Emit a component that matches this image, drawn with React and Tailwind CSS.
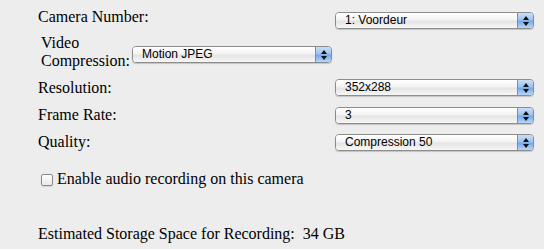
import React from 'react';

const Popup = ({ value, width, className = '' }) => (
  <div
    className={`flex h-[17px] shrink-0 overflow-hidden rounded-[4px] border border-[#8c8c8c] shadow-[0_1px_1px_rgba(0,0,0,0.18)] ${className}`}
    style={{ width }}
  >
    <div className="flex-1 bg-[linear-gradient(#ffffff,#f3f3f3_45%,#e4e4e4_55%,#f7f7f7)] pl-[9px] text-[12px] leading-[15px] text-black [font-family:'Liberation_Sans',Arial,sans-serif]">
      {value}
    </div>
    <div className="flex w-[16px] flex-col items-center justify-center gap-[2px] border-l border-[#6f8fbd] bg-[linear-gradient(#c9def7,#9ec3ef_45%,#74a9ea_55%,#b7d6fa)]">
      <svg width="6" height="4" viewBox="0 0 6 4"><path d="M3 0L6 4H0z" fill="#111" /></svg>
      <svg width="6" height="4" viewBox="0 0 6 4"><path d="M0 0H6L3 4z" fill="#111" /></svg>
    </div>
  </div>
);

const App = () => {
  return (
    <div className="h-[249px] w-[544px] overflow-hidden bg-[#ededed] pl-[38px] pt-[8px] text-[16px] leading-[18px] text-black [font-family:'Liberation_Serif','Times_New_Roman',serif]">
      {/* camera */}
      <div className="flex h-[26px] items-start">
        <div className="w-[297px]">Camera Number:</div>
        <Popup value="1: Voordeur" width={199} className="mt-[4px]" />
      </div>

      {/* compression */}
      <div className="flex h-[45px] items-start">
        <div className="ml-[3px] w-[91px]">Video Compression:</div>
        <Popup value="Motion JPEG" width={200} className="mt-[12px]" />
      </div>

      {/* resolution, frame rate, quality */}
      <div className="flex h-[27px] items-start">
        <div className="w-[297px]">Resolution:</div>
        <Popup value="352x288" width={199} />
      </div>
      <div className="flex h-[27px] items-start">
        <div className="w-[297px]">Frame Rate:</div>
        <Popup value="3" width={199} className="mt-[1px]" />
      </div>
      <div className="flex h-[27px] items-start">
        <div className="w-[297px]">Quality:</div>
        <Popup value="Compression 50" width={199} className="mt-[1px]" />
      </div>

      <div className="mt-[10px] flex items-start">
        <div className="ml-[3px] mt-[4px] h-[12px] w-[12px] rounded-[2px] border border-[#8a8a8a] bg-[linear-gradient(#ffffff,#e9e9e9)] shadow-[0_1px_1px_rgba(0,0,0,0.12)]" />
        <span className="ml-[4px]">Enable audio recording on this camera</span>
      </div>

      <div className="mt-[37px] whitespace-pre">Estimated Storage Space for Recording:  34 GB</div>
    </div>
  );
};

export default App;
